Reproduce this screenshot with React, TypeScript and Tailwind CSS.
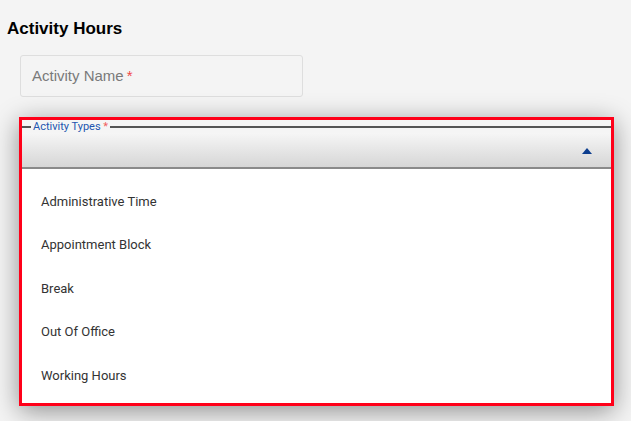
const activityTypes = [
  "Administrative Time",
  "Appointment Block",
  "Break",
  "Out Of Office",
  "Working Hours",
];

function ActivityTypesSelect() {
  return (
    <div className="ml-[19px] mt-[20px] w-[595px] border-[3px] border-[#ff0019] bg-[#f5f5f5] shadow-[0_5px_24px_rgba(0,0,0,0.42)]">
      <fieldset className="mt-[1px] border-t-2 border-[#555] px-0">
        <legend className="ml-[9px] px-[2px] text-[11px] leading-[12px] text-[#2355b0] font-['Roboto',sans-serif]">
          Activity Types <span className="text-[#f06060]">*</span>
        </legend>
        <div className="flex h-[36px] items-center justify-end bg-gradient-to-b from-[#f6f6f6] to-[#d6d6d6] pr-[19px] border-b-2 border-[#8a8a8a]">
          <svg width="10" height="6" viewBox="0 0 10 6" className="mt-[2px]">
            <path d="M0 6 L5 0 L10 6 Z" fill="#0c3d8e" />
          </svg>
        </div>
      </fieldset>
      <ul className="bg-white pt-[11px] pb-[6px]">
        {activityTypes.map((t) => (
          <li
            key={t}
            className="flex h-[43.4px] items-center pl-[19px] text-[13px] text-[#333] font-['Roboto',sans-serif]"
          >
            {t}
          </li>
        ))}
      </ul>
    </div>
  );
}

export default function App() {
  return (
    <div className="h-[421px] w-[631px] overflow-hidden bg-[#f4f4f4] font-['Liberation_Sans',Arial,sans-serif]">
      <h1 className="pl-[7px] pt-[19px] text-[17px] leading-[20px] font-bold text-black">
        Activity Hours
      </h1>
      <div className="ml-[20px] mt-[16px] flex h-[42px] w-[283px] items-center rounded-[3px] border border-[#dedede] pl-[11px] text-[15px] text-[#7a7a7a]">
        Activity Name<span className="ml-[3px] text-[#f04848]">*</span>
      </div>
      <ActivityTypesSelect />
    </div>
  );
}
